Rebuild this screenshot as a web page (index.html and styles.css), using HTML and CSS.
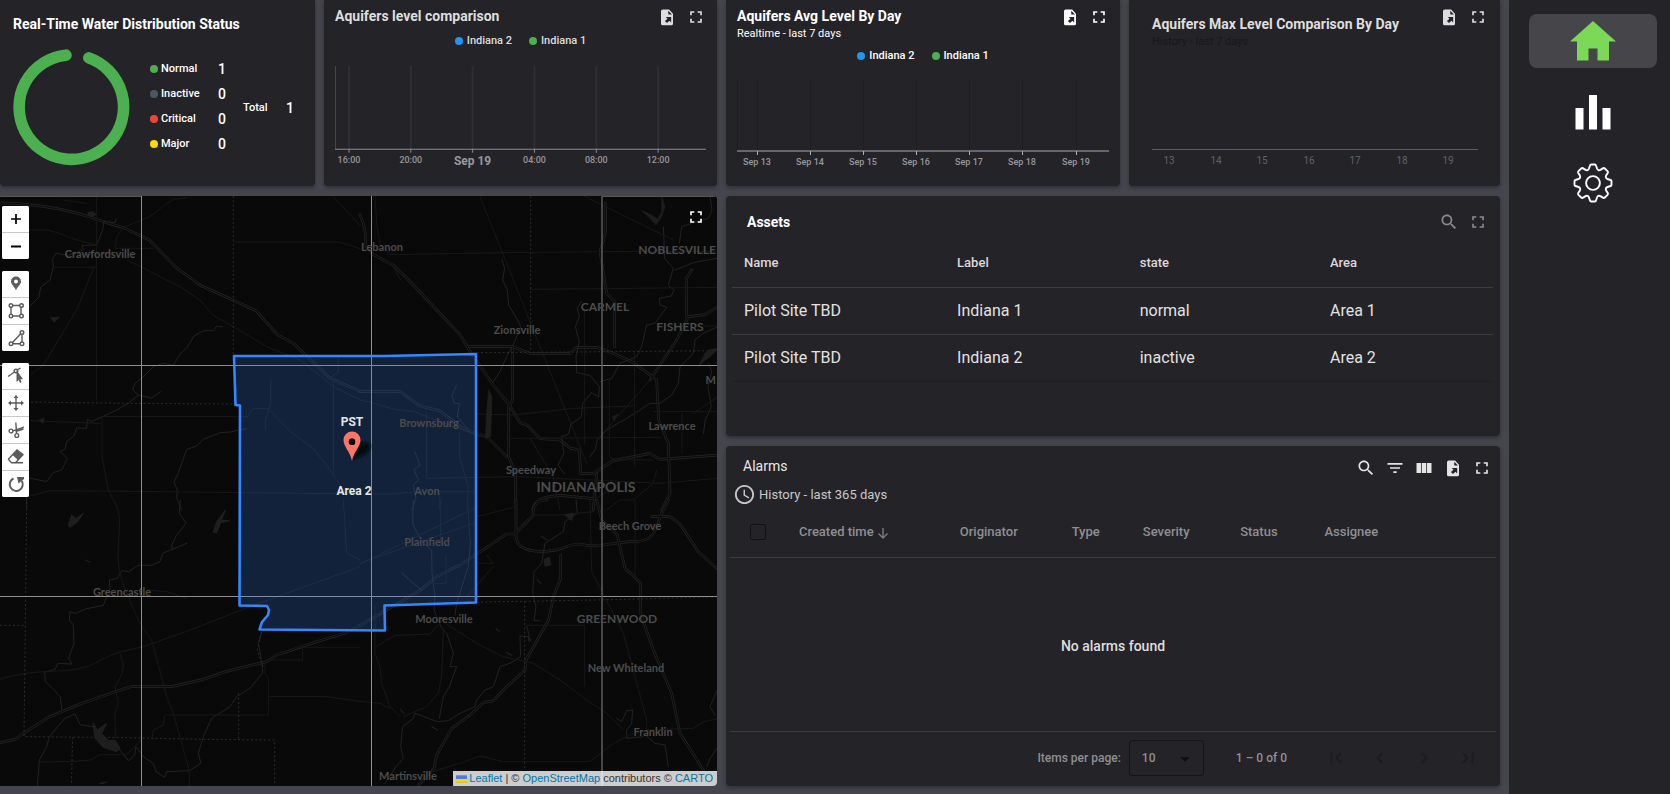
FILE: index.html
```html
<!DOCTYPE html>
<html lang="en">
<head>
<meta charset="utf-8">
<title>Water Distribution Dashboard</title>
<link rel="stylesheet" href="styles.css">
</head>
<body>
<svg class="sprite" aria-hidden="true">
  <symbol id="i-full" viewBox="0 0 24 24"><path d="M7 14H5v5h5v-2H7v-3zm-2-4h2V7h3V5H5v5zm12 7h-3v2h5v-5h-2v3zM14 5v2h3v3h2V5h-5z"/></symbol>
  <symbol id="i-file" viewBox="0 0 24 24"><path fill-rule="evenodd" d="M14.500 3H6.800Q4.800 3 4.800 5V20Q4.800 22 6.800 22H17.200Q19.200 22 19.200 20V8zM13.500 4.500V9H18zM10.500 12H17V18.500L14.900 16.500 12 19.300 9.500 16.900 12.600 14z"/></symbol>
  <symbol id="i-search" viewBox="0 0 24 24"><path d="M15.500 14h-.79l-.28-.27C15.410 12.590 16 11.110 16 9.500 16 5.910 13.090 3 9.500 3S3 5.910 3 9.500 5.910 16 9.500 16c1.610 0 3.090-.59 4.230-1.570l.27.28v.79l5 4.990L20.490 19l-4.990-5zm-6 0C7.010 14 5 11.990 5 9.500S7.010 5 9.500 5 14 7.010 14 9.500 11.990 14 9.500 14z"/></symbol>
  <symbol id="i-filter" viewBox="0 0 24 24"><path d="M10 18h4v-2h-4v2zM3 6v2h18V6H3zm3 7h12v-2H6v2z"/></symbol>
  <symbol id="i-cols" viewBox="0 0 24 24"><path d="M3 6h5.400v12H3zM9.300 6h5.400v12H9.300zM15.600 6H21v12h-5.400z"/></symbol>
</svg>
<div class="app">
  <main class="board">
    <section class="card status">
      <h2 class="title">Real-Time Water Distribution Status</h2>
      <div class="status-body">
        <svg class="donut" viewBox="0 0 116 116"><path d="M75.200 8.800A51.800 51.800 0 1 1 52.500 6.100" fill="none" stroke="#4caf50" stroke-width="11.500" stroke-linecap="round"/></svg>
        <dl class="counts">
          <div><dt><i class="dot green"></i>Normal</dt><dd>1</dd></div>
          <div><dt><i class="dot slate"></i>Inactive</dt><dd>0</dd></div>
          <div><dt><i class="dot red"></i>Critical</dt><dd>0</dd></div>
          <div><dt><i class="dot yellow"></i>Major</dt><dd>0</dd></div>
        </dl>
        <dl class="total"><dt>Total</dt><dd>1</dd></dl>
      </div>
    </section>

    <section class="card chart soft">
      <header class="bar"><h2 class="title">Aquifers level comparison</h2>
        <div class="tools"><button aria-label="Export"><svg><use href="#i-file"/></svg></button><button aria-label="Fullscreen"><svg><use href="#i-full"/></svg></button></div>
      </header>
      <ul class="legend"><li><i class="dot blue"></i>Indiana 2</li><li><i class="dot green"></i>Indiana 1</li></ul>
      <svg class="plot" viewBox="0 0 372 106">
        <path d="M14 2V85M76 2V85M138 2V85M200 2V85M262 2V85M324 2V85" stroke="#2f2f33" stroke-width="2"/>
        <path d="M.5 2V85" stroke="#48484c"/>
        <path d="M0 85.500H372M14 85V89M76 85V89M138 85V89M200 85V89M262 85V89M324 85V89" stroke="#8b8b90"/>
        <g class="tick"><text x="14" y="99">16:00</text><text x="76" y="99">20:00</text><text class="day" x="138" y="101">Sep 19</text><text x="200" y="99">04:00</text><text x="262" y="99">08:00</text><text x="324" y="99">12:00</text></g>
      </svg>
    </section>

    <section class="card chart">
      <header class="bar"><h2 class="title">Aquifers Avg Level By Day</h2>
        <div class="tools"><button aria-label="Export"><svg><use href="#i-file"/></svg></button><button aria-label="Fullscreen"><svg><use href="#i-full"/></svg></button></div>
      </header>
      <p class="sub">Realtime - last 7 days</p>
      <ul class="legend"><li><i class="dot blue"></i>Indiana 2</li><li><i class="dot green"></i>Indiana 1</li></ul>
      <svg class="plot" viewBox="0 0 372 92">
        <path d="M.5 2V72M20.500 2V72M73.500 2V72M126.500 2V72M179.500 2V72M232.500 2V72M285.500 2V72M339.500 2V72" stroke="#1e1e21"/>
        <path d="M0 73H372" stroke="#66666b" stroke-width="2"/>
        <path d="M20.500 73V77M73.500 73V77M126.500 73V77M179.500 73V77M232.500 73V77M285.500 73V77M339.500 73V77" stroke="#b0b0b4"/>
        <g class="tick"><text x="20" y="87">Sep 13</text><text x="73" y="87">Sep 14</text><text x="126" y="87">Sep 15</text><text x="179" y="87">Sep 16</text><text x="232" y="87">Sep 17</text><text x="285" y="87">Sep 18</text><text x="339" y="87">Sep 19</text></g>
      </svg>
    </section>

    <section class="card chart max soft">
      <header class="bar"><div><h2 class="title">Aquifers Max Level Comparison By Day</h2><p class="sub faint">History - last 7 days</p></div>
        <div class="tools"><button aria-label="Export"><svg><use href="#i-file"/></svg></button><button aria-label="Fullscreen"><svg><use href="#i-full"/></svg></button></div>
      </header>
      <svg class="plot" viewBox="0 0 326 30">
        <path d="M0 9.500H326" stroke="#5c5c61"/>
        <g class="tick dim"><text x="17" y="24">13</text><text x="64" y="24">14</text><text x="110" y="24">15</text><text x="157" y="24">16</text><text x="203" y="24">17</text><text x="250" y="24">18</text><text x="296" y="24">19</text></g>
      </svg>
    </section>

    <section class="map" aria-label="Map">
      <svg class="tiles" viewBox="0 196 718 590" preserveAspectRatio="xMinYMid slice">
        <defs><filter id="sh" x="-50%" y="-50%" width="200%" height="200%"><feGaussianBlur stdDeviation="1.500"/></filter></defs>
        <rect y="190" width="718" height="600" fill="#090909"/>
        <g fill="none" stroke-linejoin="round" stroke-linecap="round">
          <g transform="translate(0 190) scale(.33333)">
            <path class="hw" d="M0 38C80 42 160 50 232 70C300 88 320 100 368 112L448 150L528 232L600 285L768 362L832 434L880 460L990 565L1080 604"/>
            <path class="hwi" d="M0 38C80 42 160 50 232 70C300 88 320 100 368 112L448 150L528 232L600 285L768 362L832 434L880 460L990 565L1080 604"/>
            <path class="rv" d="M348 86L346 98 312 94 308 120 290 165 246 166 250 180 205 196 168 190 158 206 160 230 150 270 122 292 116 322 88 350"/>
            <path class="rv" d="M667 410L650 408 640 422 612 422 582 438 560 474 540 492 520 526 490 520 460 530 430 560 405 580 398 600 415 615 455 624 484 604M415 615L385 640 350 660 308 680 275 694 262 688 260 715 230 714 222 738 200 755 195 778 180 784 202 806 185 840 160 848 140 875 88 864"/>
            <path class="rv" d="M740 716L690 726 660 728 610 748 590 768 560 778 545 820 535 850 522 876 532 900 530 925 545 960"/>
            <path class="rd" d="M290 18V630M290 232H160M280 235L230 360 130 525 90 555M88 120H140C180 128 200 140 230 150L290 165M370 112L450 80 490 48 520 28 560 24M345 175H460M346 172L350 140 372 112M380 210L430 234 480 260 540 290 600 330 640 376 700 410 800 470 900 510 1010 596 1080 628M700 156H1020L1080 176M1015 500V545L990 565M90 692L300 700M306 680H740V684L758 656H805L870 724 940 776 990 840 1030 900M306 680V800L325 900 355 960M812 570V640L796 690V720M1000 565V860M90 918L150 902 400 904 1080 912M1000 20L1080 106M190 30L260 40"/>
            <path class="bd" d="M700 18V494M80 636L380 640 700 642M80 910V960"/>
            <path class="water" d="M262 66L280 64 290 74 275 82 264 76zM150 382L182 380 162 398zM116 690L134 682 130 702z"/>
          </g>
          <g transform="translate(360 190) scale(.33333)">
            <path class="hw" d="M0 75C18 110 16 140 18 170L40 194L100 226L140 264L300 434L330 484L400 585L448 645L480 698L500 704L540 746L600 750L632 775L658 780L662 850H700L760 812L870 790L900 808L1074 795M736 40V130L720 185L740 310L764 334V470M328 470H460L510 490H630L650 472H710L760 490L820 518L890 570L896 690L925 760L930 910L905 960M1074 350L1035 374L985 380L950 450L870 570M458 470V630L446 650V800L466 850L468 960M995 240L980 265V380M700 960L710 850M0 604H120L180 648L238 662L310 716L380 740L440 800M518 960C520 930 550 920 600 916L700 926"/>
            <path class="hwi" d="M0 75C18 110 16 140 18 170L40 194L100 226L140 264L300 434L330 484L400 585L448 645L480 698L500 704L540 746L600 750L632 775L658 780L662 850H700L760 812L870 790L900 808L1074 795M736 40V130L720 185L740 310L764 334V470M328 470H460L510 490H630L650 472H710L760 490L820 518L890 570L896 690L925 760L930 910L905 960M1074 350L1035 374L985 380L950 450L870 570M458 470V630L446 650V800L466 850L468 960M995 240L980 265V380M700 960L710 850M0 604H120L180 648L238 662L310 716L380 740L440 800M518 960C520 930 550 920 600 916L700 926"/>
            <path class="rv" d="M426 210L434 235 428 270 442 300 446 345 470 385 482 410 464 455 440 500 420 545 400 575M664 334L652 355 658 380 646 410 658 455 648 500 650 548 690 556 718 590 716 620 694 608 668 640 664 680 632 704 626 732 604 740 612 790 594 825 612 850M910 110L912 150 914 205 940 235 925 285 942 300 934 318 898 325 900 345 920 352 885 400 860 405 845 470 830 500 780 520 755 565 720 575M1050 18L1056 60 1045 85 1010 95 965 110 958 160M1074 204L1000 218 945 240M1074 410L1030 430 1005 450 1000 490 960 530 955 580 935 615 900 640 870 640 840 660 800 685 740 720 712 750 705 780 690 800M290 585L276 615 282 640 298 640 292 680 325 720M165 786L180 825 162 840 176 870 160 885 168 925 156 960M1046 520L1055 545 1044 590 1054 650 1036 690 1030 730"/>
            <path class="rd" d="M45 18L50 100 60 160 90 194 440 188 820 184 1074 184M360 20L520 420 600 620 680 820M668 16L940 150M510 298L820 295 1074 292M674 360V760M350 672L460 675 640 655 820 648M446 745L900 742M510 745L580 860 600 960M100 230L122 270M748 570V800L770 810H880M824 485V830M1000 670L1074 620M870 570L720 740M200 665V865L480 860 900 880 1074 865M298 730V800L325 890 322 960M0 630C60 640 80 660 160 664L360 740M0 912L100 912 165 905 340 905M238 905V960M740 960L780 930 820 930 880 880 890 840M700 930L780 880M966 670V790M880 665H1074M1030 408H1074"/>
            <path class="bd" d="M512 18V488M350 488L640 486 1074 482"/>
            <path class="water" stroke="#1e1e1e" stroke-width="2" d="M905 18L915 50 905 80 888 105 865 80 845 62 875 75 893 88 905 65zM386 600L396 620 392 740 376 745 380 670zM1015 530L1035 490 1050 478 1074 476 1050 500 1030 515zM758 680L775 672 762 692z"/>
          </g>
          <g transform="translate(0 500) scale(.33333)">
            <path class="hw" d="M0 728L45 718L75 697L145 652L188 634L240 612L350 574L392 560H515L610 538L680 514L800 485L830 465L860 455L950 425L1040 398L1080 376"/>
            <path class="hwi" d="M0 728L45 718L75 697L145 652L188 634L240 612L350 574L392 560H515L610 538L680 514L800 485L830 465L860 455L950 425L1040 398L1080 376"/>
            <path class="rv" d="M541 0L538 40 558 70 530 105 515 135 517 148 560 130M517 148L488 160 480 185 455 196 415 196 385 215 365 212 352 235 328 240 330 265 310 316 260 326 225 340 210 335 208 360 220 375 222 430 206 475 216 492 174 490 165 508 134 516 136 545 158 565 180 590 186 630M280 680L240 674 225 642 195 655 165 690 148 712 140 740 118 780 112 860M784 400L775 430 786 490 788 518 750 565 710 590 690 620 635 655 610 710 595 760 603 790 568 812 500 815 494 832 468 815 460 790 430 770 408 740 404 765 386 782 355 745"/>
            <path class="rd" d="M0 538C100 505 190 520 240 505C290 494 300 475 360 456L430 440L560 394L760 316L1080 200M340 0C370 40 355 90 354 160C354 230 370 250 395 315C430 400 440 390 458 430L500 590L520 640L568 812V858M456 715L460 690 490 675 495 645H805V535L795 520V490M805 590H980L1080 604M800 480H908V442H1080M346 710L345 640 355 610 345 560 365 525 370 495 360 460M120 786L230 784 270 780 300 764 380 764 430 712M1030 0L1040 160 1080 180M440 270L500 275 560 296"/>
            <path class="bd" d="M80 0L76 376 72 710L380 713 600 718 824 720V856M0 376H76M218 712L214 856M716 580V718M784 395L772 450 788 500"/>
            <path class="water" d="M205 75L215 45 228 56 250 40 232 66 210 82zM640 95L650 65 676 30 664 62 688 62 662 68 650 98zM256 180L268 186zM280 670L292 690 320 670 305 700 325 722 345 720 360 745 350 755 310 742 285 715zM300 850L320 846 310 850z" stroke="#202020" stroke-width="3"/>
          </g>
          <g transform="translate(360 500) scale(.33333)">
            <path class="hw" d="M468 0V110C470 140 500 154 540 154C610 156 620 130 660 132C720 148 750 125 830 124C890 124 890 70 905 40L925 0M354 160L440 102H465L520 45C515 10 540 0 560 0M602 165V235L580 290L566 360L498 480L495 510L440 560L400 602L370 608L330 645L275 686L230 765L222 805L175 856M0 376L80 330L185 268L230 230L300 195L354 160M710 0L725 60L772 105L795 205L842 250V340L880 450L935 580L960 700L1030 810M875 50H930L960 72L1015 155L1074 208"/>
            <path class="hwi" d="M468 0V110C470 140 500 154 540 154C610 156 620 130 660 132C720 148 750 125 830 124C890 124 890 70 905 40L925 0M354 160L440 102H465L520 45C515 10 540 0 560 0M602 165V235L580 290L566 360L498 480L495 510L440 560L400 602L370 608L330 645L275 686L230 765L222 805L175 856M0 376L80 330L185 268L230 230L300 195L354 160M710 0L725 60L772 105L795 205L842 250V340L880 450L935 580L960 700L1030 810M875 50H930L960 72L1015 155L1074 208"/>
            <path class="rv" d="M648 0L652 40 615 65 610 95 555 130 545 190 522 215 518 280 528 320 522 362 540 362M500 376L508 410 480 408 482 470 450 490 420 500 400 560 375 570 350 600 345 620 300 640 265 662 232 665 165 640 160 655 128 680 122 740 130 775 108 800 75 850M160 0L158 70 185 125 215 150 216 220 225 290 222 330 245 385 260 400 280 460 270 500 290 500 268 560 250 590 238 655M124 218L160 250 185 270M332 120L325 200 318 220 290 310 285 345M818 630L800 632 785 665 770 655M818 630L815 670 800 690 800 715 850 710M850 700L885 730 915 735 925 800M1074 565L1050 620 1065 645M1074 740L1050 775 1040 800"/>
            <path class="rd" d="M0 190L340 70M0 192L354 20M45 442L105 406L210 402L248 360L260 372L350 430L430 470L520 490L600 540L680 600L740 640L790 690M250 385L245 530L235 580L200 620L130 650M45 320V460L60 500L65 550L90 620L120 650M0 604L60 610L90 625M674 376H565L500 376M674 376V560M690 0L695 215L790 400L860 660V690L1000 685L1030 665 1074 656M242 0V130M258 170V250H220M322 0L330 120M354 190H400L380 165M400 200L320 290M825 0V240M200 820L300 790L360 768L430 785H690L760 730L820 700M350 50L468 20M520 45H600L700 35"/>
            <path class="bd" d="M350 306L494 304 800 298 1074 290M494 304V810"/>
            <path class="water" d="M554 178L568 172 572 195 556 198zM545 110L562 120zM532 240L542 250zM408 386L418 394zM506 412L514 420 508 424zM440 458L456 466zM216 680L232 690zM122 630L132 640zM616 45L640 40 635 60z" stroke="#202020" stroke-width="3"/>
          </g>
        </g>
        <path d="M141.500 196V786M371.500 196V786M0 365.500H718M0 596.500H718" stroke="#8f8f8f"/>
        <path d="M602 196V786" stroke="#5d5d5d" stroke-width="1.500"/>
        <path d="M0 196.500H141M602 196.500H718" stroke="#555"/>
        <path d="M234 356L384 356 476 354V602.500L384.500 605.500 385 630.500 259.500 629.500 262 622 268 615 269 610 267 606 239.500 605.500 240 405.500 235.500 405z" fill="#3388ff" fill-opacity=".2" stroke="#3388ff" stroke-width="2.600" stroke-linejoin="round"/>
        <g class="place">
          <text x="100" y="258">Crawfordsville</text><text x="382" y="251">Lebanon</text><text x="716" y="254" class="city end">NOBLESVILLE</text>
          <text x="605" y="311" class="city">CARMEL</text><text x="680" y="331" class="city">FISHERS</text><text x="517" y="334">Zionsville</text>
          <text x="429" y="427">Brownsburg</text><text x="672" y="430">Lawrence</text><text x="531" y="474">Speedway</text><text x="716" y="384" class="end">M</text>
          <text x="586" y="492" class="metro">INDIANAPOLIS</text><text x="427" y="495">Avon</text><text x="630" y="530">Beech Grove</text>
          <text x="427" y="546">Plainfield</text><text x="444" y="623">Mooresville</text><text x="617" y="623" class="city">GREENWOOD</text>
          <text x="626" y="672">New Whiteland</text><text x="653" y="736">Franklin</text><text x="408" y="780">Martinsville</text><text x="122" y="596">Greencastle</text>
        </g>
        <g class="poi"><text x="352" y="426">PST</text><text x="354" y="495">Area 2</text></g>
        <path d="M353 460L358 444Q368 440 371 446L366 454z" fill="#05080d" filter="url(#sh)"/>
        <path fill-rule="evenodd" d="M352 461C350 451 343.500 447 343.500 440A8.500 8.500 0 0 1 360.500 440C360.500 447 354 451 352 461zM352 438.500A3.200 3.200 0 1 0 352 444.900A3.200 3.200 0 1 0 352 438.500z" fill="#fd7567"/>
        <circle cx="352" cy="441.700" r="3.200" fill="#000"/>
      </svg>
      <div class="map-tools">
        <div class="group"><button aria-label="Zoom in"><svg viewBox="0 0 26 26"><path class="ink" d="M13 8V18M8 13H18" stroke-width="1.700"/></svg></button><button aria-label="Zoom out"><svg viewBox="0 0 26 26"><path class="ink" d="M8 13.500H18" stroke-width="1.900"/></svg></button></div>
        <div class="group">
          <button aria-label="Marker"><svg viewBox="0 0 26 26"><path fill-rule="evenodd" d="M13 19.500C12 16 8 13.500 8 10.500A5 5 0 0 1 18 10.500C18 13.500 14 16 13 19.500zM13 8.500A2 2 0 1 0 13 12.500A2 2 0 1 0 13 8.500z"/></svg></button>
          <button aria-label="Rectangle"><svg viewBox="0 0 26 26" class="line"><path d="M9.500 7.500H16.500M9.500 18H16.500M8 9V16.500M18 9V16.500"/><circle cx="8" cy="7.500" r="1.800"/><circle cx="18.500" cy="7.500" r="1.800"/><circle cx="8" cy="18" r="1.800"/><circle cx="18.500" cy="18" r="1.800"/></svg></button>
          <button aria-label="Polygon"><svg viewBox="0 0 26 26" class="line"><path d="M9.500 17.500L18 8.500M10 18.800H17M19 10V17"/><circle cx="19" cy="7.500" r="1.800"/><circle cx="8" cy="18.800" r="1.800"/><circle cx="19" cy="18.800" r="1.800"/></svg></button>
        </div>
        <div class="group">
          <button aria-label="Edit"><svg viewBox="0 0 26 26" class="line"><path d="M5 13.500L11.500 9M14 7L17.500 5"/><circle cx="13" cy="8" r="1.800"/><path class="solid" d="M13.500 7V19L15.800 17L17 20L18.600 19.200L17.300 16.300H20z"/></svg></button>
          <button aria-label="Move"><svg viewBox="0 0 26 26" class="line"><path d="M13 7V19M7 13H19"/><path class="solid" d="M13 5L15.500 8H10.500zM13 21L15.500 18H10.500zM5 13L8 10.500V15.500zM21 13L18 10.500V15.500z"/></svg></button>
          <button aria-label="Cut"><svg viewBox="0 0 26 26" class="line"><path d="M9.800 13.800L21 10.200M13.600 16.600L12.800 5.500M12.500 14.500L20.500 12"/><circle cx="8" cy="14" r="1.900"/><circle cx="13.800" cy="18.500" r="1.900"/></svg></button>
          <button aria-label="Erase"><svg viewBox="0 0 26 26" class="line"><path d="M6 14.500L14 6L20 10.500L12.500 18.800H8.500L5.500 15.500zM12 18.800H20"/><path class="solid" d="M14 6L20 11L15 16L9.500 11z"/></svg></button>
          <button aria-label="Rotate"><svg viewBox="0 0 26 26" class="line"><path d="M10.500 7.500A6.500 6.500 0 1 0 18.800 10" stroke-width="2"/><path class="solid" d="M14 6H21V8L15.500 12.500z"/></svg></button>
        </div>
      </div>
      <button class="map-full" aria-label="Fullscreen"><svg><use href="#i-full"/></svg></button>
      <p class="credit"><svg class="flag" viewBox="0 0 12 8"><path fill="#4c7be1" d="M0 0h12v4H0z"/><path fill="#ffd500" d="M0 4h12v3H0z"/><path fill="#e0bc00" d="M0 7h12v1H0z"/></svg><span><a href="#">Leaflet</a> | © <a href="#">OpenStreetMap</a> contributors © <a href="#">CARTO</a></span></p>
    </section>

    <section class="card assets">
      <header class="bar"><h2 class="title">Assets</h2>
        <div class="tools muted"><button aria-label="Search"><svg><use href="#i-search"/></svg></button><button aria-label="Fullscreen"><svg><use href="#i-full"/></svg></button></div>
      </header>
      <table class="grid">
        <colgroup><col class="c-name"><col class="c-label"><col class="c-state"><col></colgroup>
        <thead><tr><th>Name</th><th>Label</th><th>state</th><th>Area</th></tr></thead>
        <tbody><tr><td>Pilot Site TBD</td><td>Indiana 1</td><td>normal</td><td>Area 1</td></tr><tr class="last"><td>Pilot Site TBD</td><td>Indiana 2</td><td>inactive</td><td>Area 2</td></tr></tbody>
      </table>
    </section>

    <section class="card alarms">
      <header class="bar"><h2 class="title">Alarms</h2>
        <div class="tools"><button aria-label="Search"><svg><use href="#i-search"/></svg></button><button aria-label="Filter"><svg><use href="#i-filter"/></svg></button><button aria-label="Columns"><svg><use href="#i-cols"/></svg></button><button aria-label="Export"><svg><use href="#i-file"/></svg></button><button aria-label="Fullscreen"><svg><use href="#i-full"/></svg></button></div>
      </header>
      <p class="window"><svg viewBox="0 0 24 24"><path d="M11.990 2C6.470 2 2 6.480 2 12s4.470 10 9.990 10C17.520 22 22 17.520 22 12S17.520 2 11.990 2zM12 20c-4.420 0-8-3.580-8-8s3.580-8 8-8 8 3.580 8 8-3.580 8-8 8zm.5-13H11v6l5.250 3.150.75-1.230-4.500-2.670z"/></svg>History - last 365 days</p>
      <table class="grid alarm-grid">
        <colgroup><col class="a-check"><col class="a-time"><col class="a-orig"><col class="a-type"><col class="a-sev"><col class="a-stat"><col></colgroup>
        <thead><tr><th><input type="checkbox" aria-label="Select all"></th><th>Created time <svg class="sort" viewBox="0 0 12 12"><path d="M6 1V11M1.500 6.500L6 11L10.500 6.500" fill="none" stroke="#7c7c80" stroke-width="1.400"/></svg></th><th>Originator</th><th>Type</th><th>Severity</th><th>Status</th><th>Assignee</th></tr></thead>
      </table>
      <p class="empty">No alarms found</p>
      <footer class="pager">
        <label for="size">Items per page:</label>
        <span class="pick"><select id="size"><option>10</option></select><svg viewBox="0 0 10 5"><path d="M0 0H10L5 5z"/></svg></span>
        <span class="range">1 – 0 of 0</span>
        <div class="pages">
          <button disabled aria-label="First page"><svg viewBox="0 0 24 24"><path d="M18.410 16.590L13.820 12l4.590-4.590L17 6l-6 6 6 6zM6 6h2v12H6z"/></svg></button>
          <button disabled aria-label="Previous page"><svg viewBox="0 0 24 24"><path d="M15.410 7.410L14 6l-6 6 6 6 1.410-1.410L10.830 12z"/></svg></button>
          <button disabled aria-label="Next page"><svg viewBox="0 0 24 24"><path d="M10 6L8.590 7.410 13.170 12l-4.580 4.590L10 18l6-6z"/></svg></button>
          <button disabled aria-label="Last page"><svg viewBox="0 0 24 24"><path d="M5.590 7.410L10.180 12l-4.590 4.590L7 18l6-6-6-6zM16 6h2v12h-2z"/></svg></button>
        </div>
      </footer>
    </section>
  </main>
  <nav class="side" aria-label="Main">
    <a href="#" class="on" aria-label="Home"><svg viewBox="0 0 46 40"><path fill="#7bd957" d="M23 0L46 20.500H39V39.500H27.500V27.500H18.500V39.500H7V20.500H0z"/></svg></a>
    <a href="#" aria-label="Charts"><svg viewBox="0 0 46 40"><path fill="#fff" d="M5.500 16H13.500V37.500H5.500zM19 3H27V37.500H19zM32.500 16H40.500V37.500H32.500z"/></svg></a>
    <a href="#" aria-label="Settings"><svg viewBox="-23 -20 46 40"><g fill="none" stroke="#fff" stroke-width="1.900" stroke-linejoin="round"><circle r="6.900"/><path d="M-4-14.500L-3-17.500Q-2.700-18.500-1.700-18.500H1.700Q2.700-18.500 3-17.500L4-14.500Q5-12 7.400-13.100L10.300-14.900Q11-15.200 11.800-14.500L14.500-11.800Q15.200-11 14.900-10.300L13.100-7.400Q12-5 14.500-4L17.500-3Q18.500-2.700 18.500-1.700V1.700Q18.500 2.700 17.500 3L14.500 4Q12 5 13.100 7.400L14.900 10.300Q15.200 11 14.500 11.800L11.800 14.500Q11 15.200 10.300 14.900L7.400 13.100Q5 12 4 14.500L3 17.500Q2.700 18.500 1.700 18.500H-1.700Q-2.700 18.500-3 17.500L-4 14.500Q-5 12-7.400 13.100L-10.300 14.900Q-11 15.200-11.800 14.500L-14.500 11.800Q-15.200 11-14.900 10.300L-13.100 7.400Q-12 5-14.500 4L-17.500 3Q-18.500 2.700-18.500 1.700V-1.700Q-18.500-2.700-17.500-3L-14.500-4Q-12-5-13.100-7.400L-14.900-10.300Q-15.200-11-14.500-11.800L-11.800-14.500Q-11-15.200-10.300-14.900L-7.400-13.100Q-5-12-4-14.500z"/></g></svg></a>
  </nav>
</div>
</body>
</html>
```
FILE: styles.css
```css
* { box-sizing: border-box; }
body, h2, p, dl, dd, ul { margin: 0; padding: 0; }
body { background: #44454d; color: #fff; font-family: Roboto, "Liberation Sans", sans-serif; font-weight: 500; }
button { border: 0; padding: 0; background: none; color: inherit; display: flex; align-items: center; justify-content: center; }
svg { display: block; fill: currentColor; }
.sprite { position: absolute; width: 0; height: 0; }

.app { display: flex; min-height: 100vh; }
.board { flex: 1; min-width: 0; display: grid; column-gap: 9px; row-gap: 10px; padding: 0 9px 8px 0;
  grid-template-columns: minmax(0, 315fr) minmax(0, 393fr) minmax(0, 394fr) minmax(0, 371fr);
  grid-template-rows: 186fr 240fr 340fr; }
.card { background: #242327; border-radius: 4px; box-shadow: 0 2px 4px rgba(0, 0, 0, .3); min-width: 0; display: flex; flex-direction: column; }
.status, .chart { border-radius: 0 0 4px 4px; }

.title { font-size: 14px; line-height: 20px; font-weight: 700; white-space: nowrap; }
.sub { font-size: 11px; line-height: 16px; font-weight: 400; }
.bar { display: flex; justify-content: space-between; align-items: flex-start; }
.tools { display: flex; gap: 1px; }
.tools button { width: 28px; height: 28px; }
.tools svg, .map-full svg { width: 20px; height: 20px; }
.soft { color: #dedede; }
.dot { width: 8px; height: 8px; border-radius: 50%; flex: none; }
.green { background: #4caf50; }
.blue { background: #2196f3; }
.slate { background: #455a64; }
.red { background: #f44336; }
.yellow { background: #fbdc00; }

.status { padding: 14px 13px 0; }
.status-body { display: flex; margin-top: 15px; }
.donut { width: 117px; height: 117px; }
.counts { margin: 7px 0 0 20px; font-size: 11px; }
.counts div { display: flex; height: 25px; align-items: center; }
.counts dt { display: flex; align-items: center; gap: 3px; width: 68px; }
.counts dd, .total dd { font-size: 14px; }
.total { display: flex; align-items: center; font-size: 11px; margin-left: 17px; }
.total dt { width: 43px; }

.chart { padding: 0 11px 16px; }
.chart .bar { padding-top: 6px; height: 31px; }
.chart .tools { margin-top: -3px; margin-right: -4px; }
.chart > .sub { margin-top: -5px; }
.legend { display: flex; justify-content: center; gap: 17px; list-style: none; font-size: 11px; line-height: 16px; margin-top: 2px; }
.chart > .sub + .legend { margin-top: 6px; }
.legend li { display: flex; align-items: center; gap: 4px; }
.plot { width: 100%; margin-top: auto; }
.tick text { font-size: 9px; text-anchor: middle; fill: #98989c; }
.tick .day { font-size: 12px; font-weight: 700; }
.tick.dim text { fill: #626267; font-size: 10px; font-weight: 400; }
.max { padding: 0 22px 16px 23px; }
.max .bar { padding-top: 14px; height: auto; }
.max .tools { margin-top: -11px; margin-right: -14px; }
.faint { color: #18181a; }

.map { grid-row: 2 / 4; grid-column: 1 / 3; position: relative; overflow: hidden; border-radius: 0 4px 4px 0; background: #090909; min-height: 0; }
.tiles { width: 100%; height: 100%; position: absolute; inset: 0; }
.hw { stroke: #262626; stroke-width: 8; }
.hwi { stroke: #0c0c0c; stroke-width: 4; }
.rv { stroke: #222; stroke-width: 3; }
.rd { stroke: #181818; stroke-width: 3; }
.bd { stroke: #2c2c2c; stroke-width: 3; stroke-dasharray: 6 7; stroke-linecap: butt; }
.water { fill: #1e1e1e; }
.place { font-family: Lato, "Open Sans", sans-serif; font-size: 11px; font-weight: 700; fill: #4c4c4c; text-anchor: middle; }
.place .city { font-size: 12px; }
.place .metro { font-size: 14px; }
.place .end { text-anchor: end; }
.poi { font-size: 12px; font-weight: 700; fill: #e6e6e6; text-anchor: middle; }
.map-tools { position: absolute; left: 2px; top: 10px; display: flex; flex-direction: column; gap: 12px; }
.group { display: flex; flex-direction: column; gap: 1px; background: #c8c8c8; border-radius: 2px; overflow: hidden; }
.map-tools button { width: 27px; height: 26px; background: #fff; color: #5b5b5b; }
.map-tools svg { width: 26px; height: 26px; }
.ink { stroke: #000; }
.line { fill: none; stroke: #5b5b5b; stroke-width: 1.4; }
.line .solid { fill: #5b5b5b; stroke: none; }
.map-full { position: absolute; right: 7px; top: 7px; width: 28px; height: 28px; }
.credit { position: absolute; right: 0; bottom: 0; display: flex; align-items: center; gap: 2px; padding: 0 4px 0 3px; background: rgba(255, 255, 255, .8); color: #333; font: 11px/15px "Liberation Sans", sans-serif; white-space: nowrap; }
.credit a { color: #0078a8; text-decoration: none; }
.flag { width: 11px; height: 8px; }

.assets { padding: 12px 7px 0 6px; grid-column: 3 / 5; }
.assets .bar { padding: 4px 1px 0 15px; }
.assets .title { font-weight: 700; }
.assets .tools { margin-top: -4px; }
.muted { color: #8a8a8d; }
.grid { width: 100%; border-collapse: collapse; table-layout: fixed; text-align: left; }
.grid th, .grid td { padding: 0 0 0 12px; border-bottom: 1px solid #3c3c40; font-weight: 500; }
.assets th { height: 49px; font-size: 13px; color: #dcd8dc; }
.assets .grid { margin-top: 2px; }
.assets td { height: 47px; font-size: 16px; font-weight: 400; color: #e2e2e2; }
.assets .last td { border-color: #1f1f23; }
.c-name { width: 28%; }
.c-label { width: 24%; }
.c-state { width: 25%; }

.alarms { padding: 8px 4px 0; grid-column: 3 / 5; }
.alarms .bar { padding: 2px 0 0 13px; }
.alarms .title { font-weight: 400; color: #e8e8e8; }
.alarms .tools { margin-top: -2px; color: #e4e4e4; }
.window { display: flex; align-items: center; gap: 3px; height: 24px; margin: 0 0 0 3px; font-size: 13px; font-weight: 400; color: #c8c8c8; }
.window svg { width: 23px; height: 23px; }
.alarm-grid { margin-top: 1px; }
.alarm-grid th { height: 50px; font-size: 13px; color: #8f8f93; padding-left: 0; }
.alarm-grid input { appearance: none; display: block; width: 16px; height: 16px; margin: 0 0 0 20px; border: 1px solid #111113; border-radius: 2px; }
.sort { display: inline-block; width: 12px; height: 12px; vertical-align: -3px; }
.a-check { width: 9%; }
.a-time { width: 21%; }
.a-orig { width: 14.6%; }
.a-type { width: 9.3%; }
.a-sev { width: 12.7%; }
.a-stat { width: 11%; }
.empty { flex: 1; display: flex; align-items: center; justify-content: center; padding-top: 4px; font-size: 14px; color: #dedede; }
.pager { display: flex; align-items: center; justify-content: flex-end; height: 55px; padding-bottom: 3px; border-top: 1px solid #3c3c40; font-size: 12px; color: #8f8f93; }
.pick { position: relative; display: flex; margin-left: 8px; }
.pick select { appearance: none; width: 75px; height: 36px; padding: 0 12px; border: 1px solid #141416; border-radius: 3px; background: none; color: inherit; font: inherit; }
.pick svg { position: absolute; right: 14px; top: 17px; width: 10px; height: 5px; color: #101012; }
.range { margin-left: 32px; }
.pages { display: flex; gap: 20px; margin: 0 16px 0 37px; }
.pages button { width: 24px; height: 24px; color: #1c1c1f; }
.pages svg { width: 22px; height: 22px; }

.side { flex: none; width: 161px; background: #242327; padding: 14px 13px 0 20px; display: flex; flex-direction: column; gap: 17px; }
.side a { height: 54px; border-radius: 8px; display: flex; align-items: center; justify-content: center; }
.side .on { background: #464549; }
.side svg { width: 46px; height: 40px; }
```
